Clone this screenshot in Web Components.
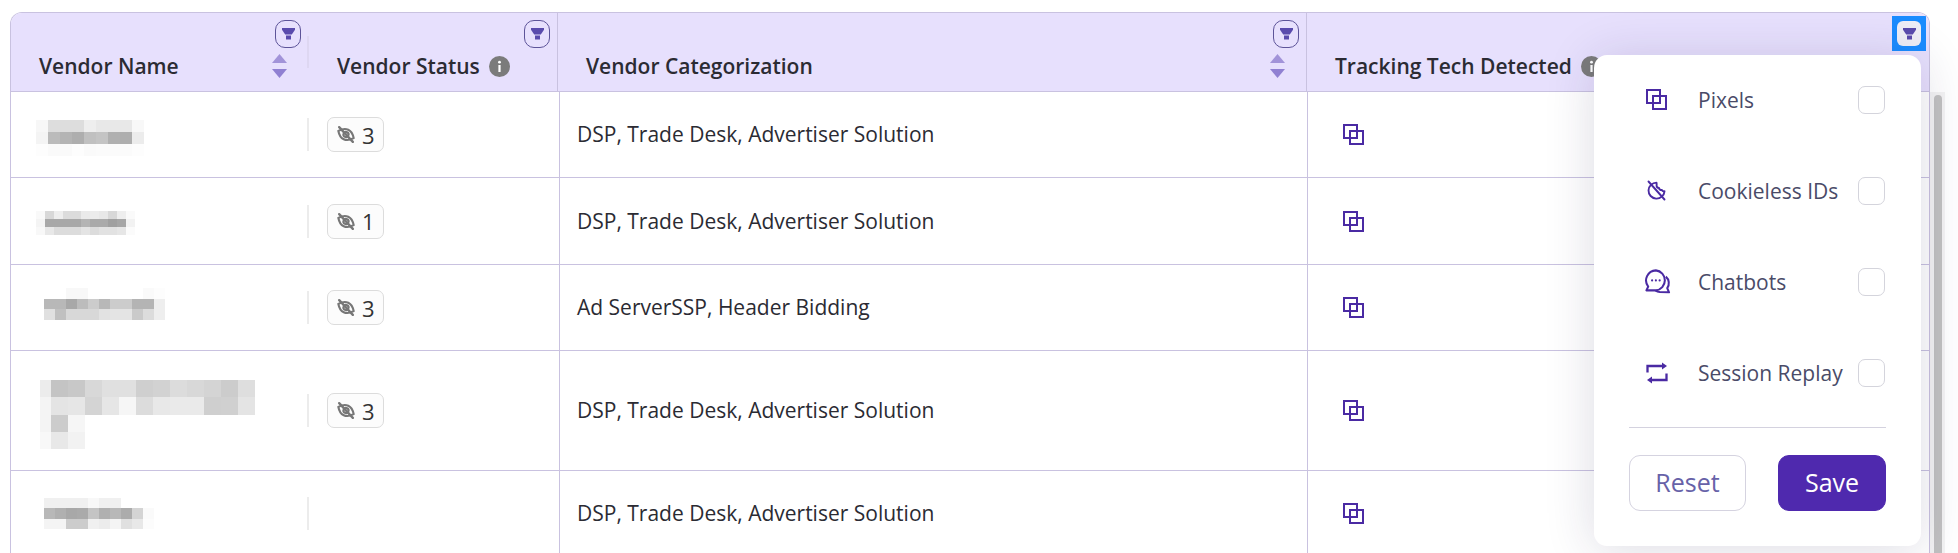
<!DOCTYPE html>
<html lang="en">
<head>
<meta charset="utf-8">
<title>Vendors</title>
<style>
  html, body { margin: 0; height: 553px; overflow: hidden; background: #fff; }
  body { font-family: "Open Sans", "Noto Sans", "Liberation Sans", sans-serif; color: #2b2b33; }
</style>
</head>
<body>
<vendor-page>
  <vendor-table>
    <table-head>
      <head-cell wide sep sortable filter>Vendor Name</head-cell>
      <head-cell info filter>Vendor Status</head-cell>
      <head-cell sortable filter>Vendor Categorization</head-cell>
      <head-cell last info filter focused>Tracking Tech Detected</head-cell>
    </table-head>
    <vendor-row h="86" badge="3">
      <pixel-blur slot="name" x="25" y="28" cw="12" rh="12" data="f7,dd,dd,dd,ee,e8,e8,e8,f8|f4,bb,b4,ae,c0,c4,b0,ae,ec|fd,fa,fa,fd,fa,fb,fb,fb,fd"></pixel-blur>
      DSP, Trade Desk, Advertiser Solution
    </vendor-row>
    <vendor-row h="87" badge="1">
      <pixel-blur slot="name" x="25" y="33" cw="9" rh="8" data="f9,d8,ee,dc,dc,ea,ec,e8,d8,ee,fa|f4,a8,a8,a8,a8,b4,aa,aa,a0,a6,f2|f8,e8,dc,dc,dc,e4,dc,e2,e2,e6,fb"></pixel-blur>
      DSP, Trade Desk, Advertiser Solution
    </vendor-row>
    <vendor-row h="86" badge="3">
      <pixel-blur slot="name" x="33" y="23" cw="11" rh="10.500" data="ff,ff,f8,f8,ff,ff,ff,ff,ff,fa,fd|b8,b8,a8,bc,cc,b8,cc,cc,b4,b4,ee|e0,c0,d8,d8,d8,e2,e4,e4,ca,dc,ee"></pixel-blur>
      Ad ServerSSP, Header Bidding
    </vendor-row>
    <vendor-row h="120" badge="3">
      <pixel-blur slot="name" x="29" y="29" cw="17" rh="17.300" first="11" data="ec,c4,c8,d8,e0,e0,cf,d2,dc,d8,d4,cc,de|f4,e4,e6,d4,e6,f6,dc,e8,ea,ea,cf,d0,e4|f4,cc,f6|f8,e8,f2"></pixel-blur>
      DSP, Trade Desk, Advertiser Solution
    </vendor-row>
    <vendor-row h="86">
      <pixel-blur slot="name" x="33" y="27" cw="11" rh="10.300" data="f0,f0,f0,f0,f8,f0,f0,ff,ff,ff|b8,b0,a8,aa,c4,b0,b8,ac,d4,fa|f4,f4,cc,cc,f0,ec,f4,e0,e8,fc"></pixel-blur>
      DSP, Trade Desk, Advertiser Solution
    </vendor-row>
  </vendor-table>
  <scroll-track></scroll-track>
  <filter-popover>
    <popover-option icon="pixels">Pixels</popover-option>
    <popover-option icon="cookie">Cookieless IDs</popover-option>
    <popover-option icon="chat">Chatbots</popover-option>
    <popover-option icon="replay">Session Replay</popover-option>
  </filter-popover>
</vendor-page>

<script>
const PURPLE = '#4a2aa3';
const ICONS = {
  pixels: `<svg width="21" height="21" viewBox="0 0 21 21" fill="none" stroke="${PURPLE}" stroke-width="2"><rect x="1" y="1" width="13" height="13"/><rect x="7" y="7" width="13" height="13"/></svg>`,
  cookie: `<svg width="21" height="21" viewBox="0 0 21 21" fill="none" stroke="${PURPLE}" stroke-width="1.900" stroke-linecap="round" stroke-linejoin="round"><path d="M10.500 2.600a8 8 0 1 0 8 8.700c-1.200.2-2.300-.3-2.700-1.400-1.300.3-2.600-.5-2.800-1.900-1.400 0-2.400-1-2.400-2.400.1-1 .1-2 -.1-3z"/><path d="M2.500 1.500l16 18"/></svg>`,
  chat: `<svg style="margin-left:-2px" width="27" height="25" viewBox="0 0 25 23" fill="none" stroke="${PURPLE}" stroke-width="1.900" stroke-linejoin="round"><path d="M20.200 7a8 8 0 0 1 1.300 10.700l1.700 3.800-8.600-.3a8 8 0 0 1-4-1.500"/><path d="M11 1.200a9.300 9.300 0 0 1 0 18.500H2.200l1.700-3.500A9.300 9.300 0 0 1 11 1.200z" fill="#fff"/><g fill="${PURPLE}" stroke="none"><circle cx="7.500" cy="10.500" r="1"/><circle cx="11" cy="10.500" r="1"/><circle cx="14.500" cy="10.500" r="1"/></g></svg>`,
  replay: `<svg width="22" height="22" viewBox="0 0 22 22" fill="none" stroke="${PURPLE}" stroke-width="2.300"><path d="M1.500 10.500V4H17"/><path d="M20.500 11.500V18H5"/><path d="M16 .5l5 3.500-5 3.500z" fill="${PURPLE}" stroke="none"/><path d="M6 14.500l-5 3.500 5 3.500z" fill="${PURPLE}" stroke="none"/></svg>`
};
const FUNNEL = `<svg width="13" height="12" viewBox="0 0 13 12"><path d="M0 0h13v1.800L9.800 6.500H3.200L0 1.800z" fill="#5a4bad"/><rect x="4" y="7.500" width="5" height="4" fill="#5a4bad"/></svg>`;

function define(name, css, html, init) {
  customElements.define(name, class extends HTMLElement {
    connectedCallback() {
      if (this.shadowRoot) return;
      const root = this.attachShadow({ mode: 'open' });
      root.innerHTML = `<style>${css}</style>${typeof html === 'function' ? html(this) : html}`;
      if (init) init(this, root);
    }
  });
}

define('vendor-page', `:host{display:flex;align-items:flex-start;position:relative;height:553px;padding:12px 0 0 10px;box-sizing:border-box;overflow:hidden}`, `<slot></slot>`);

define('vendor-table', `:host{display:block;width:1920px;box-sizing:border-box;border:1px solid #c9c2e0;border-bottom:0;border-radius:12px 12px 0 0;overflow:hidden;flex:none}`, `<slot></slot>`);

define('table-head', `:host{display:grid;grid-template-columns:298px 249px 749px 1fr;height:79px;box-sizing:border-box;background:#e7e0fd;border-bottom:1px solid #c9c2e0}`, `<slot></slot>`);

define('filter-button', `
  :host{display:block;flex:none}
  .b{display:flex;align-items:center;justify-content:center;width:26px;height:28px;box-sizing:border-box;border:1.500px solid #5d5499;border-radius:10px}
  .f{display:block;background:#1a8cff;padding:5px}
  .f .b{width:24px;height:25px;border:0;background:#eeeef6;border-radius:6px}
`, h => h.hasAttribute('focused') ? `<span class="f"><span class="b">${FUNNEL}</span></span>` : `<span class="b">${FUNNEL}</span>`);

define('sort-arrows', `
  :host{display:flex;flex-direction:column;gap:6px;margin-top:6px}
  svg{display:block}
`, `<svg width="15" height="9"><path d="M7.500 0L15 9H0z" fill="#a293d9"/></svg><svg width="15" height="9"><path d="M0 0h15L7.500 9z" fill="#9080d2"/></svg>`);

define('info-dot', `
  :host{display:inline-block;width:21px;height:21px;flex:none}
  svg{display:block}
`, `<svg width="21" height="21" viewBox="0 0 21 21"><circle cx="10.500" cy="10.500" r="10.500" fill="#7b7b7b"/><rect x="9.400" y="9" width="2.200" height="7" fill="#fff"/><circle cx="10.500" cy="6.200" r="1.400" fill="#fff"/></svg>`);

define('head-cell', `
  :host{display:flex;align-items:flex-start;box-sizing:border-box;height:78px;position:relative;padding-left:28px;border-right:1px solid #c9c2e0}
  :host([wide]){border-right:0}
  :host([last]){border-right:0}
  .title{flex:1;display:flex;align-items:center;gap:9px;margin-top:40px;font-size:21px;line-height:27px;font-weight:600;color:#2b2b33;white-space:nowrap;min-width:0}
  .tools{display:flex;flex-direction:column;align-items:flex-end;padding-top:7px;margin-right:7px;flex:none}
  :host([last]) .tools{padding-top:3px;margin-right:3px}
  :host([wide]) .tools{margin-right:6px}
  sort-arrows{margin-right:14px}
  .sep{flex:none;width:2px;height:32px;margin-top:23px;margin-right:0;background:#ded7f2}
`, h => `
  <span class="title"><slot></slot>${h.hasAttribute('info') ? '<info-dot></info-dot>' : ''}</span>
  <span class="tools">
    <filter-button ${h.hasAttribute('focused') ? 'focused' : ''}></filter-button>
    ${h.hasAttribute('sortable') ? '<sort-arrows></sort-arrows>' : ''}
  </span>
  ${h.hasAttribute('sep') ? '<span class="sep"></span>' : ''}`);

define('eye-badge', `
  :host{display:inline-flex;align-items:center;gap:6px;width:57px;height:35px;box-sizing:border-box;padding-left:8px;border:1px solid #dcdcdc;border-radius:7px;background:#fcfcfc;font-size:22px;color:#333}
  svg{display:block;flex:none}
`, `<svg width="20" height="17" viewBox="0 0 19 16" fill="none" stroke="#777" stroke-width="2" stroke-linecap="round"><g transform="rotate(25 9.500 8)"><path d="M1.500 8C4 4.500 6.700 3 9.500 3s5.500 1.500 8 5c-2.500 3.500-5.200 5-8 5S4 11.500 1.500 8z"/><circle cx="9.500" cy="8" r="2.400"/></g><path d="M3 1l13 14" stroke-width="2.200"/></svg><slot></slot>`);

define('vendor-row', `
  :host{display:grid;grid-template-columns:298px 251px 748px 1fr;box-sizing:border-box;border-bottom:1px solid #c9c2e0;background:#fff}
  .c{display:flex;align-items:center;min-width:0}
  .name{position:relative;align-items:flex-start;}
  .sep{width:2px;height:33px;background:#ececec;margin:0 18px 0 -2px;flex:none}
  .cat{border-left:1px solid #c9c2e0;margin-left:-1px;padding-left:17px;font-size:21px;color:#2b2b33;white-space:nowrap;padding-bottom:1px}
  .tech{border-left:1px solid #c9c2e0;margin-left:-1px;padding-left:35px}
  svg{display:block}
`, h => `
  <div class="c name"><slot name="name"></slot></div>
  <div class="c status"><span class="sep"></span>${h.getAttribute('badge') ? `<eye-badge>${h.getAttribute('badge')}</eye-badge>` : ''}</div>
  <div class="c cat"><slot></slot></div>
  <div class="c tech">${ICONS.pixels}</div>`,
  (h) => { h.style.height = h.getAttribute('h') + 'px'; });

define('pixel-blur', `
  :host{display:block;filter:blur(.7px)}
  .r{display:flex}
  .r i{display:block;flex:none}
`, h => {
  const cw = +h.getAttribute('cw'), rh = +h.getAttribute('rh'), first = h.getAttribute('first');
  return h.getAttribute('data').split('|').map(r =>
    `<div class="r" style="height:${rh}px">` + r.split(',').map((v, i) =>
      `<i style="width:${i === 0 && first ? first : cw}px;background:#${v}${v}${v}"></i>`).join('') + `</div>`).join('');
}, h => { h.style.margin = `${h.getAttribute('y')}px 0 0 ${h.getAttribute('x')}px`; });

define('scroll-track', `
  :host{display:block;flex:none;width:15px;height:470px;margin-top:80px;background:#f3f3f3;box-sizing:border-box;padding:3px 3px 0 4px}
  i{display:block;height:100%;background:#c1c1c1;border-radius:4px 4px 0 0}
`, `<i></i>`);

define('app-button', `
  :host{display:flex;align-items:center;justify-content:center;height:56px;box-sizing:border-box;padding-bottom:2px;border-radius:11px;font-size:25px;border:1px solid #d5d3e0;color:#6762a8;background:#fff}
  :host([primary]){border-color:#4f29ae;background:#4f29ae;color:#fff;font-weight:500}
`, `<slot></slot>`);

define('popover-option', `
  :host{display:flex;align-items:center;height:91px;box-sizing:border-box;padding-bottom:2px;font-size:21px;color:#4a4b68;white-space:nowrap}
  .i{width:25px;margin-left:15px;margin-right:29px;display:flex;justify-content:flex-start;padding-left:2px;box-sizing:border-box;flex:none}
  .t{flex:1}
  .cb{width:27px;height:28px;box-sizing:border-box;border:1px solid #d4d4dc;border-radius:7px;background:#fff;flex:none;margin-right:1px}
  svg{display:block;flex:none}
`, h => `<span class="i">${ICONS[h.getAttribute('icon')]}</span><span class="t"><slot></slot></span><span class="cb"></span>`);

define('filter-popover', `
  :host{display:block;position:absolute;left:1594px;top:55px;width:327px;height:491px;box-sizing:border-box;padding:0 35px;background:#fff;border-radius:13px;box-shadow:0 4px 50px rgba(40,30,80,.16)}
  hr{height:1px;border:0;background:#d4d2df;margin:8px 0 27px}
  .acts{display:flex;justify-content:space-between}
  app-button.r{width:117px}
  app-button.s{width:108px}
`, `<slot></slot><hr><div class="acts"><app-button class="r">Reset</app-button><app-button class="s" primary>Save</app-button></div>`);
</script>
</body>
</html>
